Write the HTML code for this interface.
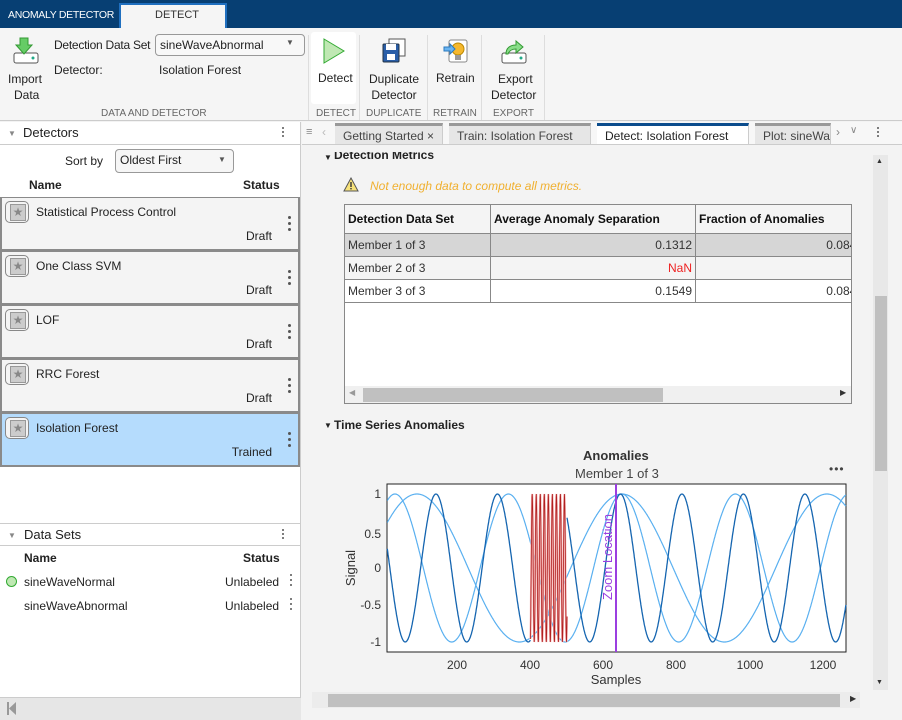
<!DOCTYPE html>
<html><head><meta charset="utf-8">
<style>
*{box-sizing:border-box;margin:0;padding:0}
body{width:902px;height:720px;overflow:hidden;position:relative;font-family:"Liberation Sans",Arial,sans-serif;font-size:12px;color:#222;background:#f3f3f3}
.a{position:absolute}
.t{position:absolute;white-space:nowrap}
.card{position:absolute;left:0;width:300px;height:54px;background:#f4f4f4;border:2px solid #8a8a8a;border-top-width:1px}
.card .ic{position:absolute;left:3px;top:3px;width:24px;height:22px;border:1px solid #888;border-radius:5px;background:#f4f4f4}
.card .ic:after{content:"★";position:absolute;left:4px;top:2px;width:14px;height:15px;background:#ccc;border:1px solid #999;color:#888;font-size:12px;line-height:14px;text-align:center}
.card .nm{position:absolute;left:34px;top:7px;font-size:12px}
.card .st{position:absolute;right:26px;top:31px;font-size:12px}
.dots{position:absolute;width:3px}
.dots i{display:block;width:3px;height:3px;border-radius:50%;background:#555;margin-bottom:3px}
.tab{position:absolute;top:123px;height:21px;background:#e6e6e6;border-top:3px solid #999;border-right:1px solid #ccc;font-size:12px;color:#444;padding:3px 0 0 8px;white-space:nowrap;overflow:hidden}
td{border:1px solid #888;padding:0 3px;height:23px;font-size:12px;color:#333}
</style></head><body>
<!-- top bar -->
<div class="a" style="left:0;top:0;width:902px;height:28px;background:#073f73"></div>
<div class="t" style="left:8px;top:9px;color:#fff;font-size:10.5px;letter-spacing:-0.3px">ANOMALY DETECTOR</div>
<div class="a" style="left:119px;top:3px;width:108px;height:25px;background:#f5f5f5;border:2px solid #1f6fbf;border-bottom:none"></div>
<div class="t" style="left:155px;top:9px;font-size:11px;color:#333">DETECT</div>
<!-- toolstrip -->
<div class="a" style="left:0;top:28px;width:902px;height:93px;background:#f5f5f5;border-bottom:1px solid #ccc"></div>
<svg class="a" style="left:12px;top:36px" width="28" height="30" viewBox="0 0 28 30"><rect x="2" y="17" width="24" height="10" rx="2" fill="#fff" stroke="#555"/><circle cx="21" cy="22" r="1.5" fill="#2a8"/><path d="M8 2h8v7h4l-8 9-8-9h4z" fill="#6c6" stroke="#393" /></svg>
<div class="t" style="left:8px;top:71px;font-size:12px;text-align:center;line-height:16px">Import<br>&nbsp;Data</div>
<div class="t" style="left:54px;top:38px;letter-spacing:-0.25px">Detection Data Set</div>
<div class="a" style="left:155px;top:34px;width:150px;height:22px;border:1px solid #999;border-radius:4px;background:#f8f8f8"></div>
<div class="t" style="left:160px;top:38px">sineWaveAbnormal</div>
<div class="t" style="left:286px;top:38px;font-size:8px;color:#555">▼</div>
<div class="t" style="left:54px;top:63px">Detector:</div>
<div class="t" style="left:159px;top:63px">Isolation Forest</div>
<div class="t" style="left:101px;top:108px;font-size:10px;color:#666">DATA AND DETECTOR</div>
<div class="a" style="left:308px;top:35px;width:1px;height:85px;background:#ddd"></div>
<div class="a" style="left:311px;top:32px;width:45px;height:72px;background:#fff;border-radius:3px"></div>
<svg class="a" style="left:322px;top:38px" width="24" height="26"><path d="M2 1L22 13L2 25Z" fill="#bfe8b3" stroke="#3a3"/></svg>
<div class="t" style="left:318px;top:71px">Detect</div>
<div class="t" style="left:316px;top:108px;font-size:10px;color:#666">DETECT</div>
<div class="a" style="left:359px;top:35px;width:1px;height:85px;background:#ddd"></div>
<svg class="a" style="left:381px;top:38px" width="26" height="26"><rect x="8" y="1" width="16" height="17" fill="#fff" stroke="#555"/><rect x="2" y="6" width="16" height="18" rx="1" fill="#2a5ea8" stroke="#234"/><rect x="5" y="6" width="10" height="6" fill="#fff"/><rect x="6" y="16" width="8" height="6" fill="#fff"/></svg>
<div class="t" style="left:369px;top:71px;text-align:center;line-height:16px">Duplicate<br>Detector</div>
<div class="t" style="left:366px;top:108px;font-size:10px;color:#666">DUPLICATE</div>
<div class="a" style="left:427px;top:35px;width:1px;height:85px;background:#ddd"></div>
<svg class="a" style="left:443px;top:38px" width="26" height="28"><rect x="6" y="2" width="18" height="22" rx="2" fill="#fff" stroke="#888"/><circle cx="15" cy="11" r="6" fill="#f5b82e" stroke="#b80"/><rect x="12" y="17" width="6" height="5" fill="#999"/><path d="M1 9h6v-3l5 5-5 5v-3H1z" fill="#6ab4f0" stroke="#2a7ac0"/></svg>
<div class="t" style="left:436px;top:71px">Retrain</div>
<div class="t" style="left:433px;top:108px;font-size:10px;color:#666">RETRAIN</div>
<div class="a" style="left:481px;top:35px;width:1px;height:85px;background:#ddd"></div>
<svg class="a" style="left:500px;top:38px" width="28" height="28"><rect x="2" y="15" width="24" height="10" rx="2" fill="#fff" stroke="#555"/><circle cx="21" cy="20" r="1.5" fill="#2a8"/><path d="M6 16c0-6 4-9 10-9V3l7 6-7 6v-4c-4 0-7 2-8 5z" fill="#8d8" stroke="#393"/></svg>
<div class="t" style="left:491px;top:71px;text-align:center;line-height:16px">&nbsp;Export<br>Detector</div>
<div class="t" style="left:493px;top:108px;font-size:10px;color:#666">EXPORT</div>
<div class="a" style="left:544px;top:35px;width:1px;height:85px;background:#ddd"></div>

<!-- left panel -->
<div class="a" style="left:0;top:122px;width:301px;height:575px;background:#fff;border-right:1px solid #ccc"></div>
<div class="a" style="left:0;top:144px;width:300px;height:1px;background:#ccc"></div>
<div class="t" style="left:8px;top:129px;font-size:8px;color:#888">▼</div>
<div class="t" style="left:23px;top:125px;font-size:13px">Detectors</div>
<div class="dots" style="left:282px;top:127px"><i style="width:2px;height:2px;margin-bottom:2px"></i><i style="width:2px;height:2px;margin-bottom:2px"></i><i style="width:2px;height:2px"></i></div>
<div class="t" style="left:65px;top:154px">Sort by</div>
<div class="a" style="left:115px;top:149px;width:119px;height:24px;border:1px solid #999;border-radius:4px;background:#f6f6f6"></div>
<div class="t" style="left:120px;top:153px">Oldest First</div>
<div class="t" style="left:218px;top:155px;font-size:8px;color:#555">▼</div>
<div class="t" style="left:29px;top:178px;font-weight:bold">Name</div>
<div class="t" style="left:243px;top:178px;font-weight:bold">Status</div>

<div class="card" style="top:197px"><div class="ic"></div><div class="nm">Statistical Process Control</div><div class="st">Draft</div><div class="dots" style="left:286px;top:18px"><i></i><i></i><i></i></div></div>
<div class="card" style="top:251px"><div class="ic"></div><div class="nm">One Class SVM</div><div class="st">Draft</div><div class="dots" style="left:286px;top:18px"><i></i><i></i><i></i></div></div>
<div class="card" style="top:305px"><div class="ic"></div><div class="nm">LOF</div><div class="st">Draft</div><div class="dots" style="left:286px;top:18px"><i></i><i></i><i></i></div></div>
<div class="card" style="top:359px"><div class="ic"></div><div class="nm">RRC Forest</div><div class="st">Draft</div><div class="dots" style="left:286px;top:18px"><i></i><i></i><i></i></div></div>
<div class="card" style="top:413px;background:#b5dcfd"><div class="ic"></div><div class="nm">Isolation Forest</div><div class="st">Trained</div><div class="dots" style="left:286px;top:18px"><i></i><i></i><i></i></div></div>

<div class="a" style="left:0;top:523px;width:300px;height:1px;background:#ccc"></div>
<div class="a" style="left:0;top:545px;width:300px;height:1px;background:#ccc"></div>
<div class="t" style="left:8px;top:531px;font-size:8px;color:#888">▼</div>
<div class="t" style="left:24px;top:527px;font-size:13px">Data Sets</div>
<div class="dots" style="left:282px;top:529px"><i style="width:2px;height:2px;margin-bottom:2px"></i><i style="width:2px;height:2px;margin-bottom:2px"></i><i style="width:2px;height:2px"></i></div>
<div class="t" style="left:24px;top:551px;font-weight:bold">Name</div>
<div class="t" style="left:243px;top:551px;font-weight:bold">Status</div>
<div class="a" style="left:6px;top:576px;width:11px;height:11px;border-radius:50%;background:#bfe8b3;border:1px solid #3a3"></div>
<div class="t" style="left:24px;top:575px">sineWaveNormal</div>
<div class="t" style="left:225px;top:575px">Unlabeled</div>
<div class="dots" style="left:290px;top:574px"><i style="width:2px;height:2px"></i><i style="width:2px;height:2px"></i><i style="width:2px;height:2px"></i></div>
<div class="t" style="left:24px;top:599px">sineWaveAbnormal</div>
<div class="t" style="left:225px;top:599px">Unlabeled</div>
<div class="dots" style="left:290px;top:598px"><i style="width:2px;height:2px"></i><i style="width:2px;height:2px"></i><i style="width:2px;height:2px"></i></div>
<div class="a" style="left:0;top:697px;width:301px;height:23px;background:#e6e6e6;border-top:1px solid #ccc"></div>
<svg class="a" style="left:7px;top:702px" width="10" height="13"><rect x="0" y="0" width="2" height="13" fill="#999"/><path d="M9 0L2 6.5L9 13Z" fill="#999"/></svg>

<!-- right tabs -->
<div class="a" style="left:302px;top:122px;width:600px;height:23px;background:#f7f7f7;border-bottom:1px solid #ccc"></div>
<div class="t" style="left:306px;top:126px;font-size:11px;color:#888">≡</div>
<div class="t" style="left:322px;top:125px;font-size:12px;color:#bbb">‹</div>
<div class="tab" style="left:335px;width:108px">Getting Started ×</div>
<div class="tab" style="left:449px;width:142px">Train: Isolation Forest</div>
<div class="tab" style="left:597px;width:152px;background:#fff;border-top-color:#0b4c8c;color:#222">Detect: Isolation Forest</div>
<div class="tab" style="left:755px;width:76px">Plot: sineWa</div>
<div class="t" style="left:836px;top:125px;color:#888">›</div>
<div class="t" style="left:850px;top:125px;color:#888;font-size:10px">∨</div>
<div class="dots" style="left:877px;top:127px"><i style="width:2px;height:2px;margin-bottom:2px"></i><i style="width:2px;height:2px;margin-bottom:2px"></i><i style="width:2px;height:2px"></i></div>

<!-- content -->
<div class="t" style="left:324px;top:153px;font-size:8px">▼</div>
<div class="t" style="left:334px;top:148px;font-weight:bold;font-size:12px;height:14px;overflow:hidden;clip-path:inset(4px 0 0 0)">Detection Metrics</div>
<svg class="a" style="left:343px;top:177px" width="16" height="15"><path d="M8 1L15 14H1Z" fill="#f7e27a" stroke="#555"/><rect x="7.3" y="5" width="1.4" height="5" fill="#333"/><rect x="7.3" y="11" width="1.4" height="1.4" fill="#333"/></svg>
<div class="t" style="left:370px;top:179px;font-style:italic;color:#f0b030;font-size:12px">Not enough data to compute all metrics.</div>
<div class="a" style="left:344px;top:204px;width:508px;height:200px;background:#fff;border:1px solid #888;overflow:hidden">
<table style="border-collapse:collapse;position:absolute;left:-1px;top:-1px;width:520px">
<tr style="height:29px;background:#f4f4f4"><td style="width:146px;font-weight:bold;color:#111">Detection Data Set</td><td style="width:205px;font-weight:bold;color:#111">Average Anomaly Separation</td><td style="font-weight:bold;color:#111">Fraction of Anomalies</td></tr>
<tr style="background:#d6d6d6"><td>Member 1 of 3</td><td style="text-align:right">0.1312</td><td style="text-align:right;padding-right:0">0.0846</td></tr>
<tr style="background:#f4f4f4"><td>Member 2 of 3</td><td style="text-align:right;color:#e22">NaN</td><td style="text-align:right;padding-right:0">0</td></tr>
<tr><td>Member 3 of 3</td><td style="text-align:right">0.1549</td><td style="text-align:right;padding-right:0">0.0846</td></tr>
</table>
<div class="a" style="left:0;top:181px;width:506px;height:18px;background:#f0f0f0"></div>
<div class="a" style="left:18px;top:183px;width:300px;height:14px;background:#c0c0c0"></div>
<div class="t" style="left:4px;top:183px;font-size:8px;color:#999">◀</div>
<div class="t" style="left:495px;top:183px;font-size:8px;color:#333">▶</div>
</div>
<div class="t" style="left:324px;top:421px;font-size:8px">▼</div>
<div class="t" style="left:334px;top:418px;font-weight:bold">Time Series Anomalies</div>
<div class="t" style="left:583px;top:448px;font-weight:bold;font-size:13px;color:#333">Anomalies</div>
<div class="t" style="left:575px;top:466px;font-size:13px;color:#444">Member 1 of 3</div>
<div class="t" style="left:829px;top:462px;font-size:12px;color:#444;letter-spacing:1px">•••</div>
<svg class="a" style="left:320px;top:480px" width="540" height="212" id="plot">
<rect x="67" y="4" width="459" height="168" fill="#fff" stroke="#222"/>
<g id="curves" fill="none"></g>
<line x1="296" y1="4" x2="296" y2="172" stroke="#9b3fe0" stroke-width="2"/>
<text transform="translate(292,120) rotate(-90)" font-family="Liberation Sans,sans-serif" font-size="13" fill="#9b3fe0">Zoom Location</text>
<g font-family="Liberation Sans,sans-serif" font-size="12" fill="#333" text-anchor="end">
<text x="61" y="18">1</text><text x="61" y="58">0.5</text><text x="61" y="92">0</text><text x="61" y="129">-0.5</text><text x="61" y="166">-1</text></g>
<g font-family="Liberation Sans,sans-serif" font-size="12" fill="#333" text-anchor="middle">
<text x="137" y="189">200</text><text x="210" y="189">400</text><text x="283" y="189">600</text><text x="356" y="189">800</text><text x="430" y="189">1000</text><text x="503" y="189">1200</text>
<text x="296" y="204" font-size="13">Samples</text>
<text transform="translate(35,88) rotate(-90)" font-size="13">Signal</text></g>
</svg>
<!-- scrollbars -->
<div class="a" style="left:873px;top:155px;width:15px;height:535px;background:#e8e8e8"></div>
<div class="a" style="left:875px;top:296px;width:12px;height:175px;background:#c0c0c0"></div>
<div class="t" style="left:876px;top:158px;font-size:7px;color:#333">▲</div>
<div class="t" style="left:876px;top:679px;font-size:7px;color:#333">▼</div>
<div class="a" style="left:312px;top:692px;width:548px;height:16px;background:#ececec"></div>
<div class="a" style="left:328px;top:694px;width:512px;height:13px;background:#c0c0c0"></div>
<div class="t" style="left:850px;top:694px;font-size:8px;color:#333">▶</div>
<script>
(function(){
var g=document.getElementById('curves');
function X(s){return 64+0.366*s}
function Y(v){return 88-74*v}
function path(f,a,b,col,w){var d='';for(var s=a;s<=b;s+=1){d+=(s==a?'M':'L')+X(s).toFixed(1)+' '+Y(f(s)).toFixed(1)}
var p=document.createElementNS('http://www.w3.org/2000/svg','path');p.setAttribute('d',d);p.setAttribute('stroke',col);p.setAttribute('stroke-width',w);g.appendChild(p);}
var dk=function(s){return Math.cos(2*Math.PI*(s-142)/168)};
var la=function(s){return Math.cos(2*Math.PI*(s-30)/310)};
var lb=function(s){return Math.cos(2*Math.PI*(s-650)/560)};
path(la,9,1262,'#5ab0f0',1.2);
path(lb,9,1262,'#5ab0f0',1.2);
path(dk,9,400,'#1565b0',1.3);
path(dk,500,1262,'#1565b0',1.3);
var an=function(s){return Math.cos(2*Math.PI*(s-405)/11)};
var d='';for(var s=400;s<=500;s+=0.5){d+=(s==400?'M':'L')+X(s).toFixed(1)+' '+Y(an(s)).toFixed(1)}
var p=document.createElementNS('http://www.w3.org/2000/svg','path');p.setAttribute('d',d);p.setAttribute('stroke','#f5b5b5');p.setAttribute('stroke-width',2);g.appendChild(p);
var q=p.cloneNode();q.setAttribute('stroke','#b02020');q.setAttribute('stroke-width',0.8);g.appendChild(q);
})();
</script>
</body></html>
